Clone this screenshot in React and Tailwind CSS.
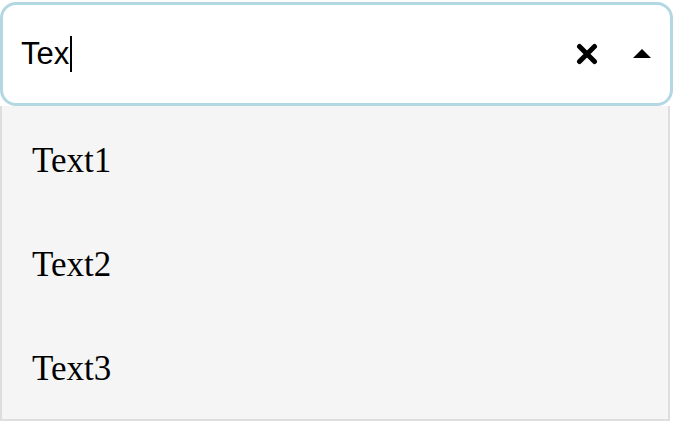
import { useState } from 'react';

const options = ['Text1', 'Text2', 'Text3'];

function ClearIcon() {
  return (
    <svg width="22" height="22" viewBox="0 0 22 22" aria-hidden="true">
      <path d="M3.5 3.5L18.5 18.5M18.5 3.5L3.5 18.5" stroke="#000" strokeWidth="5" strokeLinecap="round" />
    </svg>
  );
}

function CaretUp() {
  return (
    <svg width="18" height="9" viewBox="0 0 18 9" aria-hidden="true">
      <path d="M0 9L9 0L18 9Z" fill="#000" />
    </svg>
  );
}

export default function App() {
  const [query] = useState('Tex');

  return (
    <div className="w-[684px] h-[438px] bg-white pt-[2px]">
      <div className="w-[673px] h-[104px] border-[3px] border-[#b3d8e4] rounded-[16px] bg-white flex items-center pl-[18px] pr-[19px]">
        <div className="flex-1 flex items-center font-['Liberation_Sans',Arial,sans-serif] text-[31px] text-black">
          <span>{query}</span>
          <span className="w-[2px] h-[36px] bg-black ml-[1px]" />
        </div>
        <button className="flex items-center justify-center w-[22px] h-[22px] mr-[35px]">
          <ClearIcon />
        </button>
        <span className="flex items-center mb-[1px]">
          <CaretUp />
        </span>
      </div>
      <ul className="w-[670px] border-2 border-[#dedede] border-t-0 bg-[#f5f5f5] pt-[1px] font-['Liberation_Serif','Times_New_Roman',serif] text-[35px] text-black">
        {options.map((opt) => (
          <li key={opt} className="h-[104px] flex items-center pl-[30px] pt-[5px]">
            {opt}
          </li>
        ))}
      </ul>
    </div>
  );
}
